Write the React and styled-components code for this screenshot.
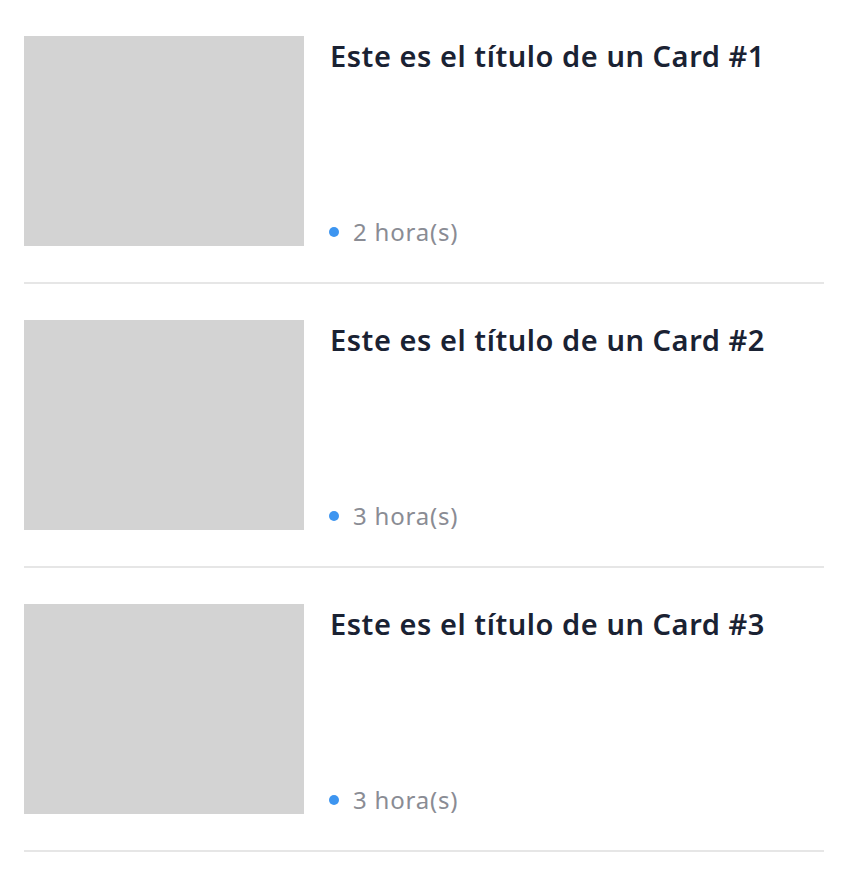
import React from "react";
import styled, { createGlobalStyle } from "styled-components";

const GlobalStyle = createGlobalStyle`
  body {
    margin: 0;
    background: #ffffff;
    font-family: "Noto Sans", "Open Sans", sans-serif;
  }
`;

const cards = [
  { id: 1, title: "Este es el título de un Card #1", time: "2 hora(s)" },
  { id: 2, title: "Este es el título de un Card #2", time: "3 hora(s)" },
  { id: 3, title: "Este es el título de un Card #3", time: "3 hora(s)" },
];

const App = () => {
  return (
    <>
      <GlobalStyle />
      <List>
        {cards.map((card) => (
          <Card key={card.id}>
            <Thumb />
            <Body>
              <Title>{card.title}</Title>
              <Meta>
                <Dot />
                {card.time}
              </Meta>
            </Body>
          </Card>
        ))}
      </List>
    </>
  );
};

export default App;

const List = styled.div`
  padding: 0 24px;
`;

const Card = styled.div`
  display: flex;
  gap: 26px;
  padding: 36px 0;
  border-bottom: 2px solid #e6e6e6;
`;

const Thumb = styled.div`
  width: 280px;
  height: 210px;
  flex-shrink: 0;
  background: #d3d3d3;
`;

const Body = styled.div`
  display: flex;
  flex-direction: column;
  justify-content: space-between;
  flex: 1;
`;

const Title = styled.h3`
  margin: 2px 0 0;
  font-size: 29px;
  font-weight: 600;
  letter-spacing: 0.55px;
  line-height: 36px;
  color: #1a2233;
`;

const Meta = styled.div`
  display: flex;
  align-items: center;
  gap: 14px;
  margin-left: -1px;
  margin-bottom: -2px;
  font-size: 24px;
  letter-spacing: 0.8px;
  line-height: 32px;
  color: #8a8c94;
`;

const Dot = styled.span`
  width: 10px;
  height: 10px;
  border-radius: 50%;
  background: #3d95f0;
`;
